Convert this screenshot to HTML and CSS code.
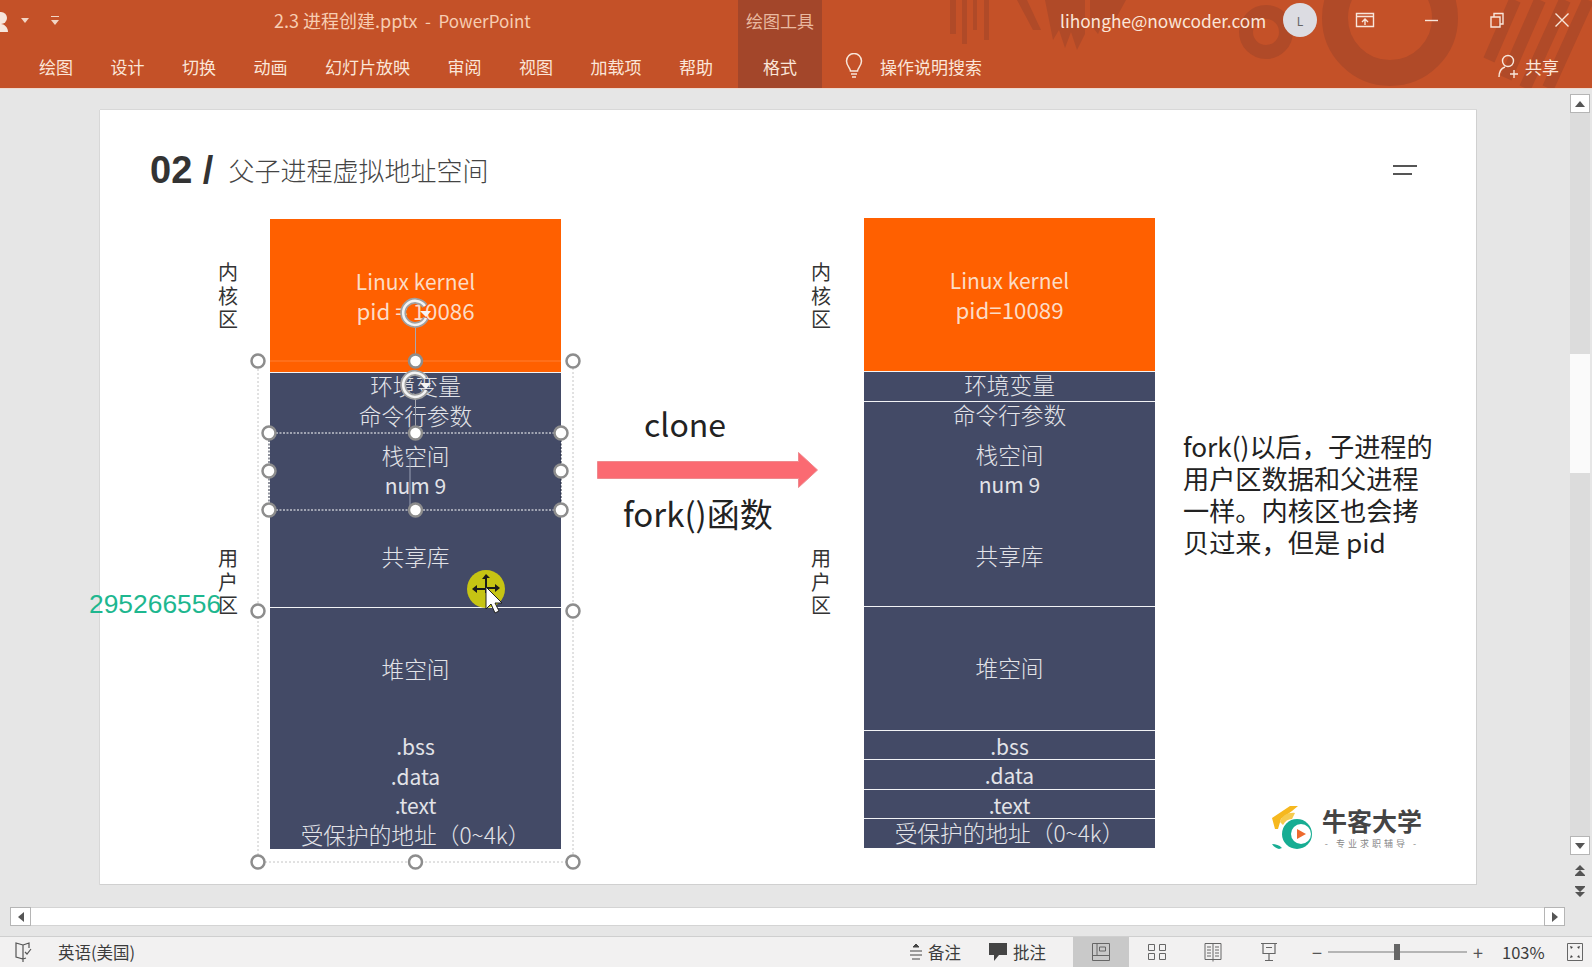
FILE: index.html
```html
<!DOCTYPE html>
<html lang="en">
<head>
    <meta charset="UTF-8">
    <meta name="viewport" content="width=device-width, initial-scale=1.0">
    <title>2.3 进程创建.pptx - PowerPoint</title>
    <link rel="stylesheet" href="styles.css">
</head>
<body>
    <header class="ribbon">
        <svg class="ribbon-art" viewBox="0 0 1592 88" width="1592" height="88">
            <g fill="#b04a28">
                <rect x="950" y="0" width="6" height="34"/><rect x="962" y="0" width="5" height="44"/>
                <rect x="973" y="0" width="4" height="30"/><rect x="984" y="0" width="5" height="40"/>
                <path d="M1017 0h10l14 30h-8zM1045 0h40v34l-8 16-6-18-6 16-6-18-6 10z"/>
                <path d="M1090 0h36l-12 22-10-2-6 14-8-10z"/>
            </g>
            <g fill="none" stroke="#b04a28">
                <circle cx="1266" cy="32" r="20" stroke-width="14"/>
                <circle cx="1390" cy="18" r="55" stroke-width="26"/>
                <path d="M1515 0l-26 60M1540 0l-34 78M1565 0l-40 88M1588 0l-40 88" stroke-width="12"/>
            </g>
        </svg>
        <div class="title-row">
            <div class="qat">
                <svg width="12" height="24" viewBox="0 0 12 24"><circle cx="1" cy="10" r="6" fill="#f6e6dc"/><path d="M-6 24c0-6 4-8 7-8s7 3 7 8z" fill="#f6e6dc"/></svg>
                <svg class="qat-drop" width="8" height="5" viewBox="0 0 8 5"><path d="M0 0h8L4 5z" fill="#f2d5c4"/></svg>
                <svg class="qat-more" width="8" height="9" viewBox="0 0 8 9"><path d="M0 0h8v1H0zM0 4h8L4 9z" fill="#f2d5c4"/></svg>
            </div>
            <div class="doc-title">2.3 进程创建.pptx<span class="doc-app">&nbsp; -&nbsp; PowerPoint</span></div>
            <div class="ctx-tab ctx-label">绘图工具</div>
            <div class="account">
                <span class="email">lihonghe@nowcoder.com</span>
                <span class="avatar">L</span>
                <div class="win-btns">
                    <svg width="20" height="16" viewBox="0 0 20 16"><path d="M1.500 1.500h17v13h-17zM1.500 4.500h17M10 13V7M7 10l3-3 3 3" fill="none" stroke="#f8e6da" stroke-width="1.400"/></svg>
                    <svg width="16" height="16" viewBox="0 0 16 16"><path d="M1 8.500h13" stroke="#f8e6da" stroke-width="1.400"/></svg>
                    <svg width="16" height="16" viewBox="0 0 16 16"><path d="M2 5h9v10H2zM5 5V1.500h9V12h-3" fill="none" stroke="#f8e6da" stroke-width="1.400"/></svg>
                    <svg width="16" height="16" viewBox="0 0 16 16"><path d="M1.500 1.500l13 13M14.500 1.500l-13 13" stroke="#f8e6da" stroke-width="1.400"/></svg>
                </div>
            </div>
        </div>
        <nav class="tab-row">
            <div class="tabs">
                <span>绘图</span><span>设计</span><span>切换</span><span>动画</span><span>幻灯片放映</span>
                <span>审阅</span><span>视图</span><span>加载项</span><span>帮助</span>
            </div>
            <div class="ctx-tab">格式</div>
            <div class="search">
                <svg width="20" height="26" viewBox="0 0 20 26"><path d="M6.500 18c0-3-4-5-4-10a7.500 7.500 0 0 1 15 0c0 5-4 7-4 10zM7 21h6M8 24h4" fill="none" stroke="#f8e6da" stroke-width="1.500"/></svg>
                <span>操作说明搜索</span>
            </div>
            <div class="share">
                <svg width="22" height="24" viewBox="0 0 22 24"><circle cx="10" cy="7" r="5.500" fill="none" stroke="#f8e6da" stroke-width="1.400"/><path d="M1 23c0-6 3-9 6-10M16 16v8M12 20h8" fill="none" stroke="#f8e6da" stroke-width="1.400"/></svg>
                <span>共享</span>
            </div>
        </nav>
    </header>

    <main class="workspace">
        <div class="stage">
            <section class="slide">
                <h1 class="slide-title"><b>02 /</b><span>父子进程虚拟地址空间</span></h1>
                <div class="menu-mark"><i></i><i></i></div>

                <div class="side-label label-a1">内<br>核<br>区</div>
                <div class="side-label label-a2">用<br>户<br>区</div>
                <div class="side-label label-b1">内<br>核<br>区</div>
                <div class="side-label label-b2">用<br>户<br>区</div>

                <div class="stack stack-left">
                    <div class="seg kernel latin"><span>Linux kernel</span><span class="pid">pid = 10086</span></div>
                    <div class="seg env ruled">环境变量</div>
                    <div class="seg cmd">命令行参数</div>
                    <div class="seg stk"><span>栈空间</span><span class="latin">num 9</span></div>
                    <div class="seg shared">共享库</div>
                    <div class="seg heap ruled">堆空间</div>
                    <div class="seg bss latin">.bss</div>
                    <div class="seg data latin">.data</div>
                    <div class="seg text latin">.text</div>
                    <div class="seg guard">受保护的地址（0~4k）</div>
                </div>

                <div class="stack stack-right">
                    <div class="seg kernel latin"><span>Linux kernel</span><span class="pid">pid=10089</span></div>
                    <div class="seg env ruled">环境变量</div>
                    <div class="seg cmd ruled">命令行参数</div>
                    <div class="seg stk"><span>栈空间</span><span class="latin">num 9</span></div>
                    <div class="seg shared">共享库</div>
                    <div class="seg heap ruled">堆空间</div>
                    <div class="seg bss ruled latin">.bss</div>
                    <div class="seg data ruled latin">.data</div>
                    <div class="seg text ruled latin">.text</div>
                    <div class="seg guard ruled">受保护的地址（0~4k）</div>
                </div>

                <div class="clone-label">clone</div>
                <svg class="clone-arrow" width="222" height="38" viewBox="0 0 222 38">
                    <path d="M.5 10.500h201V1.500l19 17.500-19 17.500v-9H.5z" fill="#fb6a72" stroke="#ee8a8f"/>
                </svg>
                <div class="fork-label">fork()函数</div>
                <p class="note">fork()以后，子进程的<br>用户区数据和父进程<br>一样。内核区也会拷<br>贝过来，但是 pid</p>

                <div class="logo">
                    <svg width="48" height="48" viewBox="0 0 48 48">
                        <path d="M2 14L20 2h8l-6 5-11 8-3 10H5z" fill="#f6b81f"/>
                        <path d="M10 18c2-7 9-10 15-9l-3 6c-4 0-7 2-9 6z" fill="#f6cb4e"/>
                        <circle cx="27" cy="30" r="15" fill="#17ad93"/>
                        <circle cx="31" cy="30" r="10" fill="#fff"/>
                        <path d="M27 25l9 5-9 5z" fill="#ee6a2e"/>
                        <path d="M2 40c4 0 7 1 10 4l-3 1c-3-1-5-2-7-5z" fill="#17ad93"/>
                    </svg>
                    <div class="logo-text">
                        <strong>牛客大学</strong>
                        <small>- 专业求职辅导 -</small>
                    </div>
                </div>

                <!-- selection frames and the pointer lie over the shapes -->
                <svg class="overlay" width="1377" height="775" viewBox="100 109 1377 775">
                    <path d="M258 360V861H573V360" fill="none" stroke="#c4c4c4" stroke-dasharray="2 2"/>
                    <path d="M258 360H573" fill="none" stroke="#fff" stroke-opacity=".2"/>
                    <path d="M269 432H561M269 509H561" stroke="#fff" stroke-dasharray="2 1.500" fill="none"/>
                    <path d="M269 432V509M561 432V509" stroke="#23283c" stroke-dasharray="2 1.500" fill="none"/>
                    <path d="M415.500 321V360M415.500 394V432" stroke="#a8a8b0" fill="none"/>
                    <path d="M410 454V506" stroke="#9aa0b4" fill="none"/>
                    <g fill="#fff" stroke="#8d8d8d" stroke-width="2.500">
                        <circle cx="258" cy="360" r="6.500"/><circle cx="415.500" cy="360" r="6.500"/><circle cx="573" cy="360" r="6.500"/>
                        <circle cx="258" cy="610" r="6.500"/><circle cx="573" cy="610" r="6.500"/>
                        <circle cx="258" cy="861" r="6.500"/><circle cx="415.500" cy="861" r="6.500"/><circle cx="573" cy="861" r="6.500"/>
                        <circle cx="269" cy="432" r="6.500"/><circle cx="415.500" cy="432" r="6.500"/><circle cx="561" cy="432" r="6.500"/>
                        <circle cx="269" cy="470" r="6.500"/><circle cx="561" cy="470" r="6.500"/>
                        <circle cx="269" cy="509" r="6.500"/><circle cx="415.500" cy="509" r="6.500"/><circle cx="561" cy="509" r="6.500"/>
                    </g>
                    <g fill="none">
                        <path d="M425 305a12 12 0 1 0 1 12" stroke="#a0a0a0" stroke-width="6"/>
                        <path d="M425 305a12 12 0 1 0 1 12" stroke="#f4f4f4" stroke-width="2.500"/>
                        <path d="M425 377a12 12 0 1 0 1 12" stroke="#a0a0a0" stroke-width="6"/>
                        <path d="M425 377a12 12 0 1 0 1 12" stroke="#f4f4f4" stroke-width="2.500"/>
                    </g>
                    <path d="M420 310h11l-5 6zM420 382h11l-5 6z" fill="#f4f4f4"/>
                    <circle cx="486" cy="588" r="19" fill="#c6c413"/>
                    <path d="M486 573l-4 5h3v9h-8v-3l-5 4 5 4v-3h8v3h2v-4h8v3l5-4-5-4v3h-8v-9h3z" fill="#1a1a1a"/>
                    <path d="M486 586v22l5-5 4 9 4-2-4-8h7z" fill="#fff" stroke="#222"/>
                </svg>

                <div class="watermark">295266556</div>
            </section>
        </div>

        <aside class="vscroll">
            <div class="sb-btn"><svg width="10" height="6" viewBox="0 0 10 6"><path d="M0 6h10L5 0z" fill="#555"/></svg></div>
            <div class="sb-track"><div class="sb-thumb"></div></div>
            <div class="sb-btn"><svg width="10" height="6" viewBox="0 0 10 6"><path d="M0 0h10L5 6z" fill="#555"/></svg></div>
            <svg class="sb-page" width="10" height="11" viewBox="0 0 10 11"><path d="M5 0l5 5H0zM5 5l5 5H0z" fill="#555"/><path d="M0 10.500h10" stroke="#555"/></svg>
            <svg class="sb-page" width="10" height="11" viewBox="0 0 10 11"><path d="M5 11L0 6h10zM5 6L0 1h10z" fill="#555"/><path d="M0 .5h10" stroke="#555"/></svg>
        </aside>
    </main>

    <div class="hscroll">
        <div class="sb-btn"><svg width="6" height="10" viewBox="0 0 6 10"><path d="M6 0v10L0 5z" fill="#555"/></svg></div>
        <div class="hs-track"></div>
        <div class="sb-btn"><svg width="6" height="10" viewBox="0 0 6 10"><path d="M0 0v10l6-5z" fill="#555"/></svg></div>
    </div>

    <footer class="status">
        <svg class="st-book" width="18" height="20" viewBox="0 0 18 20"><path d="M8 3L1 1v14l7 2zM8 3l6-2v5M8 17l3-1M8 17v3" fill="none" stroke="#555" stroke-width="1.200"/><path d="M10 10l2 2 4-5" fill="none" stroke="#555" stroke-width="1.200"/></svg>
        <span class="st-lang">英语(美国)</span>
        <div class="st-right">
            <span class="st-item">
                <svg width="14" height="18" viewBox="0 0 14 18"><path d="M4 4l3-3 3 3zM1 8h12M1 12h12M3 16h8" fill="#444" stroke="#444"/></svg>备注
            </span>
            <span class="st-item">
                <svg width="20" height="20" viewBox="0 0 20 20"><path d="M1 1h18v12H11l-5 6v-6H1z" fill="#444"/></svg>批注
            </span>
            <div class="views">
                <span class="view active"><svg width="20" height="20" viewBox="0 0 20 20"><path d="M1.500 1.500h17v17h-17zM1.500 13.500h17M6 1.500v12M8.500 5h6v4h-6z" fill="none" stroke="#666"/></svg></span>
                <span class="view"><svg width="20" height="18" viewBox="0 0 20 18"><path d="M1.500 1.500h6v6h-6zM12.500 1.500h6v6h-6zM1.500 10.500h6v6h-6zM12.500 10.500h6v6h-6z" fill="none" stroke="#666"/></svg></span>
                <span class="view"><svg width="20" height="20" viewBox="0 0 20 20"><path d="M2 1.500h16v16H2zM10 1.500v18M4 5h4M4 8h4M4 11h4M4 14h4M12 5h4M12 8h4M12 11h4M12 14h4" fill="none" stroke="#666"/></svg></span>
                <span class="view"><svg width="20" height="20" viewBox="0 0 20 20"><path d="M2 1.500h16M4 1.500v10h12v-10M10 11.500v7M6 18.500h8M7 5.500h6" fill="none" stroke="#666" stroke-width="1.200"/></svg></span>
            </div>
            <div class="zoom-ctl">
                <span class="zoom-sign">−</span>
                <div class="slider"><i></i></div>
                <span class="zoom-sign">+</span>
            </div>
            <span class="zoom-pct">103%</span>
            <svg class="st-fit" width="18" height="20" viewBox="0 0 18 20"><path d="M1.500 1.500h15v17h-15z" fill="none" stroke="#666"/><path d="M4 4l3 1-2 2zM14 4l-1 3-2-2zM4 16l1-3 2 2zM14 16l-3-1 2-2z" fill="#444"/></svg>
        </div>
    </footer>
</body>
</html>
```
FILE: styles.css
```css
* {
    box-sizing: border-box;
}

body {
    display: flex;
    flex-direction: column;
    width: 1592px;
    height: 967px;
    margin: 0;
    overflow: hidden;
    background-color: #e6e6e6;
    color: #333;
    font-family: "Noto Sans CJK SC", "Noto Sans", sans-serif;
}

/* ribbon */
.ribbon {
    position: relative;
    flex: none;
    height: 89px;
    background-color: #c45128;
    border-bottom: 1px solid #eed9cf;
    color: #fbe6d9;
}

.ribbon-art {
    position: absolute;
    top: 0;
    left: 0;
}

.title-row,
.tab-row {
    position: relative;
    display: flex;
    align-items: center;
    height: 44px;
}

.qat {
    display: flex;
    align-items: center;
    width: 274px;
    margin-bottom: 4px;
}

.qat-drop {
    margin-left: 9px;
}

.qat-more {
    margin-left: 22px;
}

.doc-title {
    width: 464px;
    margin-bottom: 4px;
    font-size: 18px;
    white-space: nowrap;
    color: #f7cdb2;
}

.doc-app {
    font-size: 17px;
}

.ctx-tab {
    display: flex;
    align-items: center;
    justify-content: center;
    flex: none;
    width: 84px;
    height: 100%;
    background-color: #a3462a;
    font-size: 17px;
}

.ctx-label {
    padding-bottom: 4px;
    color: #e9b9a0;
}

.account {
    display: flex;
    align-items: center;
    margin-bottom: 4px;
    margin-left: 238px;
}

.email {
    width: 223px;
    font-size: 17.3px;
}

.avatar {
    display: flex;
    align-items: center;
    justify-content: center;
    width: 34px;
    height: 34px;
    border-radius: 50%;
    background-color: #dcdce2;
    color: #666;
    font-size: 12px;
}

.win-btns {
    display: flex;
    align-items: center;
    gap: 49px;
    margin-left: 38px;
}

.tabs {
    display: flex;
    gap: 37.5px;
    width: 738px;
    padding-left: 39px;
    font-size: 17px;
}

.search {
    display: flex;
    align-items: center;
    gap: 16px;
    margin-left: 22px;
    font-size: 17px;
}

.share {
    display: flex;
    align-items: center;
    gap: 5px;
    margin-left: 516px;
    font-size: 17px;
}

/* workspace */
.workspace {
    display: flex;
    flex: none;
    height: 818px;
}

.stage {
    flex: 1;
    padding: 21px 0 0 100px;
}

.slide {
    position: relative;
    width: 1377px;
    height: 775px;
    background-color: #fff;
    border: 1px solid #d0d0d0;
    border-width: 0 1px 1px 0;
    box-shadow: 0 -1px 0 #d8d8d8, -1px 0 0 #d8d8d8;
}

.slide-title {
    position: absolute;
    top: 39px;
    left: 50px;
    display: flex;
    align-items: baseline;
    gap: 15px;
    margin: 0;
    font-weight: normal;
    color: #444;
}

.slide-title b {
    font-family: "Liberation Sans", sans-serif;
    font-size: 38px;
    color: #333;
}

.slide-title span {
    position: relative;
    top: -2px;
    font-size: 26px;
    font-weight: 300;
}

.menu-mark {
    position: absolute;
    top: 55px;
    left: 1293px;
    width: 24px;
}

.menu-mark i {
    display: block;
    height: 2px;
    margin-bottom: 6px;
    background-color: #555;
}

.menu-mark i:last-child {
    width: 19px;
}

.side-label {
    position: absolute;
    width: 24px;
    font-size: 20px;
    line-height: 23.5px;
    text-align: center;
    color: #333;
}

.label-a1 { top: 150px; left: 116px; }
.label-a2 { top: 436px; left: 116px; }
.label-b1 { top: 150px; left: 709px; }
.label-b2 { top: 436px; left: 709px; }

/* memory layout stacks */
.stack {
    position: absolute;
    display: flex;
    flex-direction: column;
    width: 291px;
    background-color: #434a66;
    color: #e2e3e8;
    font-size: 22.7px;
    font-weight: 300;
}

.stack-left {
    top: 109px;
    left: 170px;
}

.stack-right {
    top: 108px;
    left: 764px;
}

.seg {
    display: flex;
    flex-direction: column;
    align-items: center;
    justify-content: center;
    flex: none;
    line-height: 28.5px;
    white-space: nowrap;
}

.latin {
    font-size: 21px;
    font-weight: 400;
}

.pid {
    font-size: 22.3px;
}

.ruled {
    border-top: 1px solid #f2f3f6;
}

.kernel { height: 153px; background-color: #ff6000; color: #fcdcc6; }
.env { height: 30px; padding-bottom: 2px; }
.cmd { height: 30px; padding-bottom: 2px; }
.stk { height: 72px; padding-top: 5px; }
.shared { height: 103px; padding-top: 3px; }
.heap { height: 124px; }
.bss { height: 29px; padding-top: 2px; }
.data { height: 30px; padding-top: 2px; }
.text { height: 29px; padding-top: 2px; }
.guard { height: 30px; }

.stack-left .guard {
    padding-top: 3px;
}

.clone-label {
    position: absolute;
    top: 290px;
    left: 544px;
    font-size: 32px;
    color: #222;
}

.clone-arrow {
    position: absolute;
    top: 341px;
    left: 497px;
}

.fork-label {
    position: absolute;
    top: 379px;
    left: 523px;
    font-size: 33px;
    color: #222;
}

.note {
    position: absolute;
    top: 320px;
    left: 1083px;
    margin: 0;
    font-size: 26.2px;
    line-height: 32px;
    white-space: nowrap;
    color: #222;
}

.logo {
    position: absolute;
    top: 694px;
    left: 1170px;
    display: flex;
    align-items: center;
    gap: 4px;
}

.logo-text {
    display: flex;
    flex-direction: column;
    align-items: center;
}

.logo-text strong {
    font-size: 25px;
    line-height: 30px;
    color: #444;
}

.logo-text small {
    margin-top: 2px;
    font-size: 9px;
    letter-spacing: 3px;
    line-height: 14px;
    color: #888;
}

.overlay {
    position: absolute;
    top: 0;
    left: 0;
}

.watermark {
    position: absolute;
    top: 479px;
    left: -11px;
    font-family: "Liberation Sans", sans-serif;
    font-size: 26.4px;
    color: #1eb78f;
}

/* scrollbars */
.vscroll {
    display: flex;
    flex-direction: column;
    align-items: center;
    flex: none;
    width: 20px;
    margin-right: 2px;
    padding-top: 5px;
}

.sb-btn {
    display: flex;
    align-items: center;
    justify-content: center;
    flex: none;
    width: 20px;
    height: 19px;
    background-color: #fff;
    border: 1px solid #b5b5b5;
}

.sb-track {
    flex: none;
    width: 20px;
    height: 723px;
    padding-top: 241px;
    background-color: #dcdcdc;
}

.sb-thumb {
    height: 119px;
    background-color: #fafafa;
}

.sb-page {
    display: block;
    margin-top: 10px;
}

.hscroll {
    display: flex;
    flex: none;
    align-items: stretch;
    height: 19px;
    padding: 0 27px 0 10px;
    margin-bottom: 10px;
}

.hscroll .sb-btn {
    width: 21px;
    height: 19px;
}

.hs-track {
    flex: 1;
    background-color: #fff;
    border: 1px solid #d4d4d4;
    border-width: 1px 0;
}

/* status bar */
.status {
    position: relative;
    display: flex;
    flex: none;
    align-items: center;
    height: 31px;
    background-color: #f2f1f1;
    border-top: 1px solid #cfcfcf;
    font-size: 16.5px;
    color: #3c3c3c;
}

.st-book {
    margin-left: 15px;
}

.st-lang {
    margin-left: 25px;
}

.st-right {
    display: flex;
    align-items: center;
    height: 100%;
    margin-left: auto;
}

.st-item {
    display: flex;
    align-items: center;
    gap: 5px;
    margin-right: 27px;
}

.views {
    display: flex;
    height: 100%;
}

.view {
    display: flex;
    align-items: center;
    justify-content: center;
    width: 56px;
    height: 100%;
}

.view.active {
    background-color: #c9c9c9;
}

.zoom-ctl {
    display: flex;
    align-items: center;
    gap: 6px;
    margin-left: 15px;
}

.zoom-sign {
    font-size: 18px;
    color: #555;
}

.slider {
    position: relative;
    width: 139px;
    height: 2px;
    background-color: #b5b5b5;
}

.slider i {
    position: absolute;
    top: -7px;
    left: 66px;
    width: 6px;
    height: 16px;
    background-color: #666;
}

.zoom-pct {
    width: 44px;
    margin-left: 19px;
    white-space: nowrap;
}

.st-fit {
    margin: 0 8px 0 20px;
}
```
